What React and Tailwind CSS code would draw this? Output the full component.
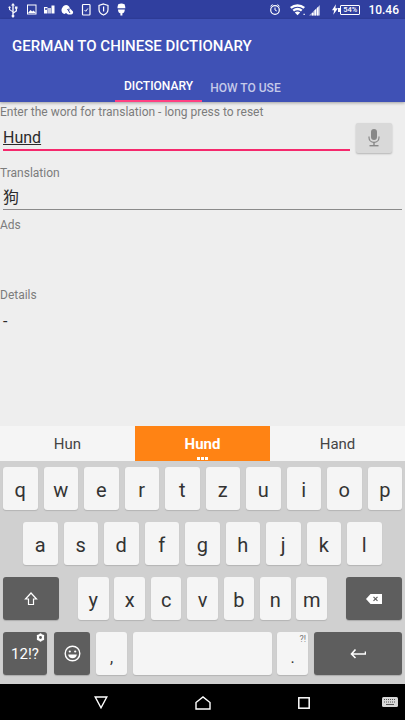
const R = { fontFamily: 'Roboto, sans-serif' };

function Key({ children, className = 'w-[34.5px]' }) {
  return (
    <div className={`${className} h-[43px] shrink-0 rounded-[3px] bg-[#f5f5f5] shadow-[0_1px_1px_#b4b4b4] flex items-center justify-center text-[20px] text-[#333333] pt-[2px]`}>
      {children}
    </div>
  );
}
function Dark({ children, className }) {
  return (
    <div className={`${className} relative h-[43px] shrink-0 rounded-[3px] bg-[#5e5e5e] shadow-[0_1px_1px_#ababab] flex items-center justify-center text-white`}>
      {children}
    </div>
  );
}

function StatusLeft() {
  return (
    <svg width="135" height="19" viewBox="0 0 135 19" fill="#fff">
      <path d="M13 3l2 2.500h-1.300V12l2-1.500V8.800h-.8V6.500h2.600v2.300H17v2.400l-3.300 2.400v1.200a1.400 1.400 0 1 1-1.400 0V12L9 9.800V8.300a1.100 1.100 0 1 1 1.100 0v1l2.200 1.600V5.500H11z" opacity=".95" />
      <rect x="27.500" y="5" width="8.500" height="9" fill="none" stroke="#fff" strokeWidth="1" />
      <path d="M28 13l2.500-3 1.700 1.600 1.300-1 2.500 2.400z" />
      <rect x="44" y="7" width="3.500" height="6.500" />
      <rect x="48" y="8" width="3" height="5.500" opacity=".7" />
      <rect x="51.500" y="5.500" width="3" height="8" />
      <circle cx="46" cy="9" r="1" fill="#303f9f" />
      <path d="M61.500 10.500c0-2.500 2.200-5.500 4.500-5.500 2 0 3.500 1.400 3.800 3.200L73 11.500c.5 1.500-.3 3-2 3h-3l-2-1.500-1.500 1c-1.800-.5-3-2-3-3.500z" />
      <path d="M67.500 9l2.500 4M69 8.500v2" stroke="#303f9f" strokeWidth="1" fill="none" />
      <rect x="82.500" y="4.500" width="7.500" height="10.500" rx=".8" fill="none" stroke="#fff" strokeWidth="1.200" />
      <path d="M84.500 10l1.300 1.300 2-2.800" stroke="#fff" strokeWidth="1" fill="none" />
      <path d="M103.500 4l4.500 1.500v4c0 2.700-2 4.500-4.500 5.500-2.500-1-4.500-2.800-4.500-5.500v-4z" fill="none" stroke="#fff" strokeWidth="1.200" />
      <rect x="103" y="6.500" width="1.200" height="5" />
      <path d="M117.500 7.500a3.900 3.900 0 0 1 7.800 0v.8h-7.800zM118 9.500h6.800c0 2.500-1 3.500-2.400 3.800v2.200h-2v-2.200C119 13 118 12 118 9.500z" />
      <path d="M118.500 4l1 1.500M124.300 4l-1 1.500" stroke="#fff" strokeWidth=".8" />
    </svg>
  );
}

function StatusRight() {
  return (
    <div className="flex items-center h-full pr-[6px]">
      <svg width="52" height="19" viewBox="272 0 52 19" fill="#fff" className="shrink-0">
        <circle cx="278" cy="10" r="4.300" fill="none" stroke="#fff" strokeWidth="1.200" />
        <path d="M278 7.500V10l1.800 1M273.500 6.300l2-1.800M282.500 6.300l-2-1.800" stroke="#fff" strokeWidth="1" fill="none" />
        <path d="M293 7a12 12 0 0 1 15 0l-1.500 1.800a9.500 9.500 0 0 0-12 0zM295.500 9.800a8 8 0 0 1 10 0l-1.500 1.800a5.500 5.500 0 0 0-7 0zM297.800 12.500a4.500 4.500 0 0 1 5.400 0l-2.700 2.800z" />
        <path d="M306.500 13.800h1.300v1.300h-1.300z" />
        <path d="M312 15.500L323 5v10.500z" opacity=".55" />
        <path d="M315 15.500v-2.500h1.500v2.500zM317.500 15.500v-5l1.500-1.500v6.500zM320 15.500V8l1.500-1.500v9z" />
      </svg>
      <svg width="6" height="11" viewBox="0 0 7 12" fill="#fff" className="ml-[11px] mr-[1px] shrink-0">
        <path d="M4.500 0L0 7h2.500L1.500 12 7 4.500H4z" />
      </svg>
      <div className="relative ml-[1px] w-[20px] h-[10px] border border-white rounded-[1px] mr-[8px] shrink-0 text-[7.500px] leading-[8px] font-medium text-white text-center">
        54%
        <div className="absolute left-[-3px] top-[2px] w-[2px] h-[4px] bg-white" />
      </div>
      <span className="text-[12px] font-medium text-white shrink-0">10.46</span>
    </div>
  );
}

export default function App() {
  return (
    <div style={R} className="w-[405px] h-[720px] flex flex-col bg-[#eeeeee] overflow-hidden">
      <div className="h-[19px] shrink-0 bg-[#303f9f] flex justify-between items-center">
        <StatusLeft />
        <StatusRight />
      </div>

      <div className="h-[83px] shrink-0 bg-[#3f51b5] flex flex-col shadow-[0_1px_3px_#00000055] relative">
        <div className="h-[55px] flex items-center pl-[12px] text-[15px] font-medium text-white">GERMAN TO CHINESE DICTIONARY</div>
        <div className="flex-1 flex pl-[115px]">
          <div className="w-[87px] border-b-2 border-[#ff4081] flex items-center justify-center text-[12px] font-medium text-white pb-[3px]">DICTIONARY</div>
          <div className="w-[87px] flex items-center justify-center text-[12px] font-medium text-[#c5cae9] pb-[1px]">HOW TO USE</div>
        </div>
      </div>

      <div className="flex-1 flex flex-col text-[#7c7c7c]">
        <div className="text-[12px] leading-[14px] mt-[3px]">Enter the word for translation - long press to reset</div>
        <div className="flex items-start mt-[4px] pl-[3px]">
          <div className="w-[347px] h-[28px] border-b-2 border-b-[#f5286c] text-[16px] leading-[30px] text-[#2a2a2a]"><span className="underline">Hund</span></div>
          <div className="ml-[6px] w-[36px] h-[30px] rounded-[2px] bg-[#d9d9d9] shadow-[0_1px_2px_#00000040] flex items-center justify-center">
            <svg width="16" height="20" viewBox="0 0 16 20" fill="#888888">
              <rect x="5" y="1" width="6" height="11" rx="3" />
              <path d="M3 8.500v1c0 2.700 2 4.800 5 4.800s5-2.100 5-4.800v-1" fill="none" stroke="#888888" strokeWidth="1.200" />
              <rect x="7.300" y="14" width="1.400" height="3" />
              <rect x="3.500" y="17" width="9" height="1.400" />
            </svg>
          </div>
        </div>
        <div className="text-[12px] leading-[14px] mt-[13px]">Translation</div>
        <div className="ml-[3px] w-[399px] h-[30px] border-b border-[#8a8a8a] text-[16px] leading-[36px] text-[#2a2a2a]" style={{ fontFamily: 'Roboto, "Noto Sans CJK SC", sans-serif' }}>狗</div>
        <div className="text-[12px] leading-[14px] mt-[8px]">Ads</div>
        <div className="text-[12px] leading-[14px] mt-[56px]">Details</div>
        <div className="text-[16px] leading-[20px] mt-[10px] ml-[3px] text-[#2a2a2a]">-</div>
      </div>

      <div className="h-[35px] shrink-0 flex bg-[#f5f5f5] text-[15px] text-[#444444]">
        <div className="w-[135px] flex items-center justify-center pt-[1px]">Hun</div>
        <div className="w-[135px] bg-[#ff8314] flex items-center justify-center relative font-bold text-white pt-[1px]">
          Hund
          <div className="absolute bottom-[1px] left-0 right-0 flex justify-center gap-[1px]">
            <i className="w-[3px] h-[3px] bg-white" /><i className="w-[3px] h-[3px] bg-white" /><i className="w-[3px] h-[3px] bg-white" />
          </div>
        </div>
        <div className="w-[135px] flex items-center justify-center pt-[1px]">Hand</div>
      </div>

      <div className="h-[223px] shrink-0 bg-[#d0d0d0] pt-[6px] flex flex-col gap-[12px]">
        <div className="flex gap-[6px] px-[3px]">
          {'qwertzuiop'.split('').map(k => <Key key={k}>{k}</Key>)}
        </div>
        <div className="flex gap-[6px] pl-[23px]">
          {'asdfghjkl'.split('').map(k => <Key key={k}>{k}</Key>)}
        </div>
        <div className="flex px-[3px] justify-between">
          <Dark className="w-[56px]">
            <svg width="14" height="14" viewBox="0 0 14 14" fill="none" stroke="#fff" strokeWidth="1.200"><path d="M7 1L1.500 7H4.500V12.500H9.500V7H12.500z" /></svg>
          </Dark>
          <div className="flex gap-[5.800px]">
            {'yxcvbnm'.split('').map(k => <Key key={k} className="w-[30.600px]">{k}</Key>)}
          </div>
          <Dark className="w-[56px]">
            <svg width="16" height="12" viewBox="0 0 16 12" fill="#fff"><path d="M4.500 1H16V11H4.500L0 6z" /><path d="M7.500 3.800l4 4M11.500 3.800l-4 4" stroke="#5e5e5e" strokeWidth="1.200" /></svg>
          </Dark>
        </div>
        <div className="flex pl-[3px] gap-[6px]">
          <Dark className="w-[44px] text-[15px]">
            <span className="mt-[2px]">12!?</span>
            <svg className="absolute top-[1px] right-[2px]" width="9" height="9" viewBox="0 0 10 10" fill="#fff"><circle cx="5" cy="5" r="2.800" fill="none" stroke="#fff" strokeWidth="2.400" /><circle cx="5" cy="1.500" r="1.200" /><circle cx="5" cy="8.500" r="1.200" /><circle cx="2" cy="3.200" r="1.200" /><circle cx="8" cy="3.200" r="1.200" /><circle cx="2" cy="6.800" r="1.200" /><circle cx="8" cy="6.800" r="1.200" /></svg>
          </Dark>
          <Dark className="w-[36px] ml-[1px]">
            <svg width="17" height="17" viewBox="0 0 17 17" fill="none" stroke="#fff" strokeWidth="1.400"><circle cx="8.500" cy="8.500" r="7.300" /><circle cx="5.800" cy="6.500" r="1.100" fill="#fff" stroke="none" /><circle cx="11.200" cy="6.500" r="1.100" fill="#fff" stroke="none" /><path d="M4.200 9.500h8.600c0 2.400-2 3.800-4.300 3.800s-4.300-1.400-4.300-3.800z" fill="#fff" stroke="none" /></svg>
          </Dark>
          <Key className="w-[31px]"><span className="text-[16px] mt-[7px]">,</span></Key>
          <Key className="w-[139px]"></Key>
          <Key className="w-[31px] ml-[-1px] relative">
            <span className="text-[16px] mt-[7px]">.</span>
            <span className="absolute top-[1px] right-[2px] text-[9px] leading-[12px] text-[#777777]">?!</span>
          </Key>
          <Dark className="w-[88px]">
            <svg width="16" height="11" viewBox="0 0 16 11" fill="none" stroke="#fff" strokeWidth="1.600"><path d="M15.500 3.500V6H2M5.500 1.500L1.500 6l4 4" /></svg>
          </Dark>
        </div>
      </div>

      <div className="h-[36px] shrink-0 bg-black flex items-center pl-[94px]">
        <svg width="14" height="13" viewBox="0 0 14 13" fill="none" stroke="#fff" strokeWidth="1.400"><path d="M1.200 1h11.600L7 11.800z" /></svg>
        <svg className="ml-[87px] mt-[1px]" width="16" height="14" viewBox="0 0 16 14" fill="none" stroke="#fff" strokeWidth="1.400"><path d="M1 6.500L8 1l7 5.500V13H1z" /></svg>
        <svg className="ml-[87px] mt-[1px]" width="12" height="12" viewBox="0 0 12 12" fill="none" stroke="#fff" strokeWidth="1.500"><rect x=".8" y=".8" width="10.400" height="10.400" /></svg>
        <svg className="ml-[72px]" width="16" height="11" viewBox="0 0 16 11"><rect width="16" height="10" rx="1.500" fill="#d8d8d8" /><path d="M2 2.500h12M2 5h12" stroke="#555" strokeWidth="1" strokeDasharray="1 1" /><path d="M4 7.500h8" stroke="#555" strokeWidth="1" /></svg>
      </div>
    </div>
  );
}
